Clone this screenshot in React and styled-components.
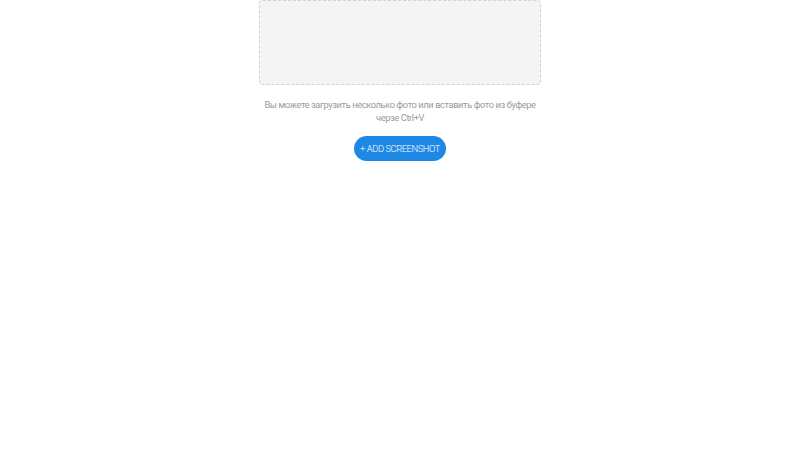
import React from "react";
import styled, { createGlobalStyle } from "styled-components";

const Global = createGlobalStyle`
  html, body { margin: 0; padding: 0; background: #fff; }
  body { font-family: Roboto, "Noto Sans", sans-serif; }
`;

const Page = styled.div`
  display: flex;
  flex-direction: column;
  align-items: center;
`;

const Column = styled.div`
  width: 282px;
  display: flex;
  flex-direction: column;
  align-items: center;
`;

const DropZone = styled.div`
  box-sizing: border-box;
  width: 100%;
  height: 85px;
  background: #f4f4f4;
  border: 1px dashed #d2d2d2;
  border-radius: 4px;
`;

const Hint = styled.p`
  margin: 13px -20px 0;
  font-size: 9.3px;
  line-height: 13px;
  font-weight: 400;
  letter-spacing: -0.4px;
  color: #9a9a9a;
  text-align: center;
  white-space: nowrap;
`;

const AddButton = styled.button`
  margin-top: 12px;
  height: 25px;
  padding: 0 6px;
  border: none;
  border-radius: 13px;
  background: #1e88e5;
  color: #fff;
  font-family: Roboto, "Noto Sans", sans-serif;
  font-size: 9.3px;
  font-weight: 300;
  letter-spacing: -0.4px;
  text-transform: uppercase;
  cursor: pointer;
`;

export default function App() {
  return (
    <>
      <Global />
      <Page>
        <Column>
          <DropZone />
          <Hint>
            Вы можете загрузить несколько фото или вставить фото из буфере
            <br />
            черзе Ctrl+V
          </Hint>
          <AddButton>+ Add screenshot</AddButton>
        </Column>
      </Page>
    </>
  );
}
